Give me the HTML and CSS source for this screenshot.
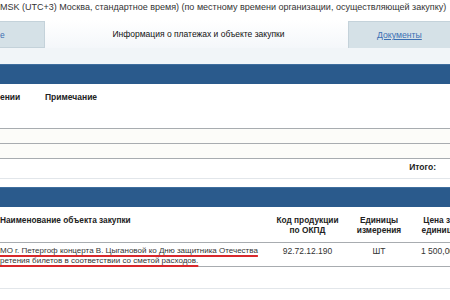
FILE: index.html
```html
<!DOCTYPE html>
<html lang="ru">
<head>
<meta charset="utf-8">
<title>Информация о платежах и объекте закупки</title>
<link rel="stylesheet" href="styles.css">
</head>
<body>
<div class="page">
  <div class="tz">MSK (UTC+3) Москва, стандартное время) (по местному времени организации, осуществляющей закупку)</div>
  <div class="tabs">
    <div class="tab tab-left"><a href="#">е</a></div>
    <div class="tab tab-active">Информация о платежах и объекте закупки</div>
    <div class="tab tab-right"><a href="#">Документы</a></div>
  </div>
  <div class="band"></div>
  <div class="bar"></div>
  <section class="notes">
    <div class="notes-head">
      <span class="nc1">ении</span>
      <span class="nc2">Примечание</span>
    </div>
    <div class="row-empty"></div>
    <div class="row-empty"></div>
    <div class="total"><span>Итого:</span></div>
  </section>
  <div class="gap"></div>
  <div class="bar"></div>
  <table class="items">
    <colgroup>
      <col class="w-name"><col class="w-code"><col class="w-unit"><col class="w-price">
    </colgroup>
    <thead>
      <tr>
        <th class="th-name">Наименование объекта закупки</th>
        <th>Код продукции<br>по ОКПД</th>
        <th>Единицы<br>измерения</th>
        <th>Цена за<br>единицу</th>
      </tr>
    </thead>
    <tbody>
      <tr class="data">
        <td class="td-name"><span class="mark">МО г. Петергоф концерта В. Цыгановой ко Дню защитника Отечества</span><br><span class="mark">ретения билетов в соответствии со сметой расходов.</span></td>
        <td>92.72.12.190</td>
        <td>ШТ</td>
        <td class="td-price">1 500,00</td>
      </tr>
      <tr class="empty"><td colspan="4"></td></tr>
    </tbody>
  </table>
</div>
</body>
</html>
```
FILE: styles.css
```css
html, body {
  margin: 0;
  padding: 0;
  background: #ffffff;
  overflow: hidden;
}
.page {
  width: 450px;
  height: 300px;
  overflow: hidden;
  font-family: "Liberation Sans", Arial, sans-serif;
  font-size: 8.5px;
  color: #222;
}
.tz {
  height: 18px;
  line-height: 15px;
  font-size: 9px;
  white-space: nowrap;
  color: #333;
}
.tabs {
  display: flex;
  align-items: flex-end;
  height: 30px;
}
.tab {
  height: 27px;
  display: flex;
  align-items: center;
  box-sizing: border-box;
  white-space: nowrap;
}
.tab a {
  color: #3c70b4;
  text-decoration: underline;
}
.tab-left {
  width: 45px;
  background: #d5e1e7;
  border: 1px solid #c4d2da;
  border-left: none;
}
.tab-left a { text-decoration: none; }
.tab-active {
  width: 303px;
  height: 28px;
  justify-content: center;
  background: linear-gradient(#ffffff, #f4f7fa);
  color: #111;
  font-size: 8.5px;
  padding-left: 4px;
}
.tab-right {
  flex: 1;
  background: #d5e1e7;
  border-left: 1px solid #c4d2da;
  border-top: 1px solid #c4d2da;
  padding-left: 28px;
  font-size: 8.7px;
}
.band {
  height: 16px;
  background: #f1f5f8;
}
.bar {
  height: 20px;
  background: #2a5a8c;
  border-top: 1px solid #3f6e9e;
  box-sizing: border-box;
}
.notes-head {
  display: flex;
  height: 45px;
  padding-top: 8px;
  box-sizing: border-box;
  font-weight: bold;
  border-bottom: 1px solid #a8acb0;
}
.nc1 { width: 45px; }
.row-empty {
  height: 15px;
  background: #fcfcf9;
  border-bottom: 1px solid #a8acb0;
  box-sizing: border-box;
}
.total {
  height: 20px;
  display: flex;
  justify-content: flex-end;
  align-items: center;
  padding-right: 14px;
  padding-bottom: 4px;
  box-sizing: border-box;
  font-weight: bold;
  border-bottom: 1px solid #e2e6ea;
}
.gap { height: 8px; }
.items {
  width: 470px;
  border-collapse: collapse;
  table-layout: fixed;
}
.w-name { width: 265px; }
.w-code { width: 85px; }
.w-unit { width: 58px; }
.w-price { width: 62px; }
.items th {
  font-weight: bold;
  font-size: 8.3px;
  text-align: center;
  vertical-align: top;
  padding: 8px 0 0;
  height: 35px;
  box-sizing: border-box;
  line-height: 10px;
  border-bottom: 1px solid #a8acb0;
  white-space: nowrap;
  color: #222;
}
.items th.th-name { text-align: left; }
.items td {
  text-align: center;
  vertical-align: top;
  padding: 3px 0 0;
  height: 23px;
  box-sizing: border-box;
  line-height: 10px;
  border-bottom: 1px solid #a8acb0;
  color: #333;
  white-space: nowrap;
}
.items td.td-name { text-align: left; font-size: 8px; }
.items td.td-price { text-align: left; padding-left: 13px; }
.mark {
  text-decoration: underline;
  text-decoration-color: #d8282c;
  text-decoration-thickness: 1.5px;
  text-underline-offset: 1.5px;
  text-decoration-skip-ink: none;
}
.items tr.empty td {
  height: 22px;
  border-bottom: 1px solid #e2e6ea;
}
```
